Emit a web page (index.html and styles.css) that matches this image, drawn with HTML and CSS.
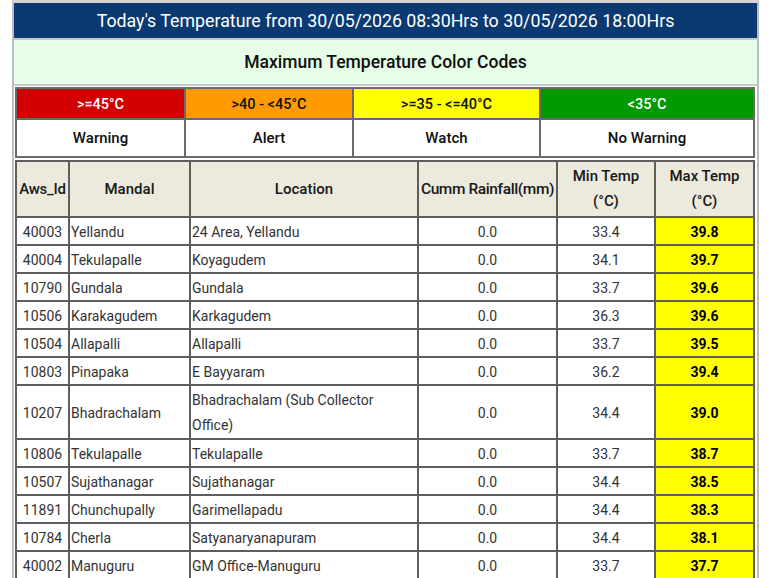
FILE: index.html
```html
<!DOCTYPE html>
<html>
<head>
<meta charset="utf-8">
<link rel="stylesheet" href="styles.css">
</head>
<body>
<div class="wrap">
  <div class="title">Today's Temperature from 30/05/2026 08:30Hrs to 30/05/2026 18:00Hrs</div>
  <div class="subtitle">Maximum Temperature Color Codes</div>
  <table class="codes">
    <colgroup><col class="c1"><col class="c2"><col class="c3"><col class="c4"></colgroup>
    <tr class="swatch">
      <td class="red">&gt;=45°C</td>
      <td class="orange">&gt;40 - &lt;45°C</td>
      <td class="yellow">&gt;=35 - &lt;=40°C</td>
      <td class="green">&lt;35°C</td>
    </tr>
    <tr class="label">
      <td>Warning</td>
      <td>Alert</td>
      <td>Watch</td>
      <td>No Warning</td>
    </tr>
  </table>
  <table class="data">
    <colgroup><col class="w1"><col class="w2"><col class="w3"><col class="w4"><col class="w5"><col class="w6"></colgroup>
    <tr class="head">
      <th class="aws">Aws_Id</th>
      <th>Mandal</th>
      <th>Location</th>
      <th class="rain">Cumm Rainfall(mm)</th>
      <th>Min Temp<br>(°C)</th>
      <th>Max Temp<br>(°C)</th>
    </tr>
    <tr><td class="id">40003</td><td>Yellandu</td><td>24 Area, Yellandu</td><td class="c">0.0</td><td class="c">33.4</td><td class="max">39.8</td></tr>
    <tr><td class="id">40004</td><td>Tekulapalle</td><td>Koyagudem</td><td class="c">0.0</td><td class="c">34.1</td><td class="max">39.7</td></tr>
    <tr><td class="id">10790</td><td>Gundala</td><td>Gundala</td><td class="c">0.0</td><td class="c">33.7</td><td class="max">39.6</td></tr>
    <tr><td class="id">10506</td><td>Karakagudem</td><td>Karkagudem</td><td class="c">0.0</td><td class="c">36.3</td><td class="max">39.6</td></tr>
    <tr><td class="id">10504</td><td>Allapalli</td><td>Allapalli</td><td class="c">0.0</td><td class="c">33.7</td><td class="max">39.5</td></tr>
    <tr><td class="id">10803</td><td>Pinapaka</td><td>E Bayyaram</td><td class="c">0.0</td><td class="c">36.2</td><td class="max">39.4</td></tr>
    <tr><td class="id">10207</td><td>Bhadrachalam</td><td class="two">Bhadrachalam (Sub Collector Office)</td><td class="c">0.0</td><td class="c">34.4</td><td class="max">39.0</td></tr>
    <tr><td class="id">10806</td><td>Tekulapalle</td><td>Tekulapalle</td><td class="c">0.0</td><td class="c">33.7</td><td class="max">38.7</td></tr>
    <tr><td class="id">10507</td><td>Sujathanagar</td><td>Sujathanagar</td><td class="c">0.0</td><td class="c">34.4</td><td class="max">38.5</td></tr>
    <tr><td class="id">11891</td><td>Chunchupally</td><td>Garimellapadu</td><td class="c">0.0</td><td class="c">34.4</td><td class="max">38.3</td></tr>
    <tr><td class="id">10784</td><td>Cherla</td><td>Satyanaryanapuram</td><td class="c">0.0</td><td class="c">34.4</td><td class="max">38.1</td></tr>
    <tr><td class="id">40002</td><td>Manuguru</td><td>GM Office-Manuguru</td><td class="c">0.0</td><td class="c">33.7</td><td class="max">37.7</td></tr>
  </table>
</div>
</body>
</html>
```

FILE: styles.css
```css
html, body {
  margin: 0;
  padding: 0;
  background: #ffffff;
}
body {
  font-family: Roboto, "Noto Sans", sans-serif;
  color: #333;
}
.wrap {
  margin-left: 12px;
  width: 743px;
  border-left: 2px solid #bdbdbd;
  border-right: 2px solid #bdbdbd;
  border-top: 3px solid #d4d4d4;
}
.title {
  height: 35px;
  line-height: 35px;
  background: #0a3a71;
  color: #ffffff;
  font-size: 17.8px;
  text-align: center;
}
.subtitle {
  height: 44px;
  line-height: 44px;
  border-top: 2px solid #c9c9c9;
  border-bottom: 2px solid #c9c9c9;
  background: #e6fde7;
  color: #111;
  font-family: "Roboto Medium", Roboto, sans-serif;
  font-size: 17.5px;
  font-weight: 500;
  text-align: center;
}
table {
  border-spacing: 0;
  border-collapse: separate;
  table-layout: fixed;
}
.codes {
  margin: 1px 0 0 1px;
  width: 740px;
  border: 2px solid #6a6a6a;
}
.codes col.c1 { width: 169px; }
.codes col.c2 { width: 168px; }
.codes col.c3 { width: 187px; }
.codes col.c4 { width: 212px; }
.codes td {
  padding: 0;
  text-align: center;
  font-family: "Roboto Medium", Roboto, sans-serif;
  font-weight: 700;
  border-right: 2px solid #6a6a6a;
}
.codes td:last-child { border-right: 0; }
.swatch td {
  height: 28px;
  padding-top: 1px;
  font-size: 14.5px;
  border-bottom: 2px solid #6a6a6a;
}
.label td {
  height: 36px;
  font-size: 15px;
  font-weight: 500;
  color: #111;
  background: #fff;
}
.red { background: #d20000; color: #fff; }
.orange { background: #ff9b00; color: #111; }
.yellow { background: #ffff00; color: #111; }
.green { background: #009a00; color: #fff; }

.data {
  margin: 2px 0 0 1px;
  width: 740px;
  border-left: 2px solid #5e5e5e;
  border-top: 2px solid #5e5e5e;
}
.data col.w1 { width: 53px; }
.data col.w2 { width: 121px; }
.data col.w3 { width: 228px; }
.data col.w4 { width: 139px; }
.data col.w5 { width: 98px; }
.data col.w6 { width: 99px; }
.data th, .data td {
  border-right: 2px solid #5e5e5e;
  border-bottom: 2px solid #5e5e5e;
}
.data th {
  background: #ece9dd;
  color: #1a1a1a;
  font-family: "Roboto Medium", Roboto, sans-serif;
  font-size: 15px;
  font-weight: 500;
  line-height: 25px;
  padding: 2px 0;
  text-align: center;
}
.data th.aws { font-size: 15px; letter-spacing: -0.3px; }
.data th.rain { font-size: 15.5px; letter-spacing: -0.4px; white-space: nowrap; }
.data td {
  font-size: 14px;
  line-height: 24px;
  padding: 2px 0 0 1px;
  text-align: left;
  color: #333;
}
.data td.two { line-height: 25px; }
.data td.id { text-align: center; padding: 2px 0 0 0; }
.data td.c { text-align: center; padding: 2px 0 0 0; }
.data td.max {
  text-align: center;
  padding: 2px 0 0 0;
  background: #ffff00;
  color: #000;
  font-weight: 700;
}
```
